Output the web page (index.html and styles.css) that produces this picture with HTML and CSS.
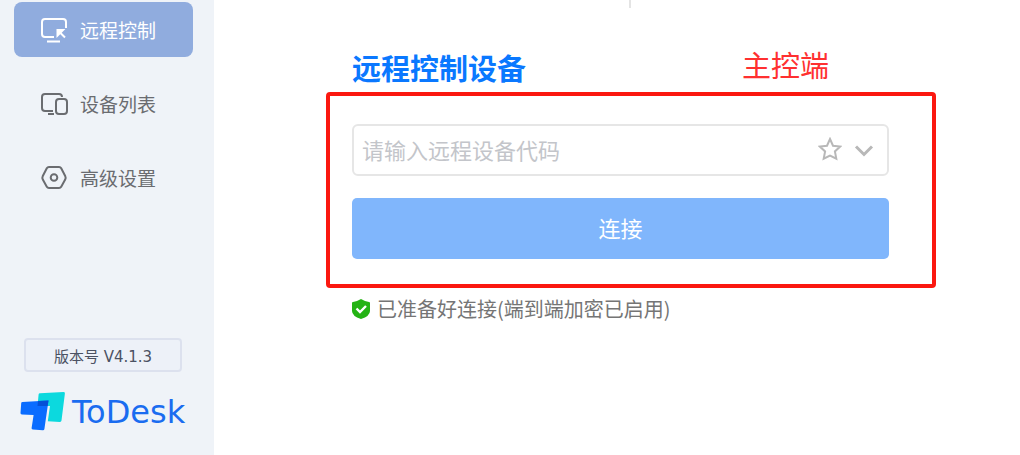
FILE: index.html
```html
<!DOCTYPE html>
<html lang="zh-CN">
<head>
    <meta charset="UTF-8">
    <meta name="viewport" content="width=device-width, initial-scale=1">
    <title>ToDesk</title>
    <link rel="stylesheet" href="styles.css">
</head>
<body>
    <div class="app">
        <aside class="sidebar">
            <nav class="menu">
                <a class="menu-item active" href="#control">
                    <svg class="menu-icon" viewBox="0 0 28 28" aria-hidden="true">
                        <path d="M14 21H5a3 3 0 0 1-3-3V6a3 3 0 0 1 3-3h18a3 3 0 0 1 3 3v6M7 25.500h13"/>
                        <path d="M25 21.500l-7-7"/>
                        <path fill="currentColor" d="M17.500 19.500V14h5.500z"/>
                    </svg>
                    <span>远程控制</span>
                </a>
                <a class="menu-item" href="#devices">
                    <svg class="menu-icon" viewBox="0 0 28 28" aria-hidden="true">
                        <path d="M13 21H5a3 3 0 0 1-3-3V7a3 3 0 0 1 3-3h14a3 3 0 0 1 3 3M8 24h6"/>
                        <rect x="16" y="9" width="11" height="15" rx="3"/>
                    </svg>
                    <span>设备列表</span>
                </a>
                <a class="menu-item" href="#settings">
                    <svg class="menu-icon" viewBox="0 0 28 28" aria-hidden="true">
                        <path d="M9 3h10q1.500 0 2.200 1.300l4 7.700q.9 1.800 0 3.600l-4 7.100Q20.500 24 19 24H9q-1.500 0-2.200-1.300l-4-7.100q-.9-1.800 0-3.600l4-7.700Q7.500 3 9 3z"/>
                        <circle cx="14" cy="13.500" r="3.300"/>
                    </svg>
                    <span>高级设置</span>
                </a>
            </nav>

            <div class="sidebar-footer">
                <button class="version" type="button">版本号 V4.1.3</button>
                <div class="brand">
                    <svg class="brand-logo" viewBox="0 0 46 40" aria-hidden="true">
                        <path fill="#0cd9de" d="M20 1.200L43.500 0q1.500 0 1.400 1.400L41.500 28.500q-.2 1.500-1.700 1.400L27.800 29.200 30 14H17.500L18.600 2.500Q18.700 1.300 20 1.200z"/>
                        <path fill="#0a6cff" d="M2.500 10l26-1.500-4.100 28.500q-.2 1.400-1.600 1.300l-10-.8q-1.400-.1-1.200-1.500l2-13-11.700-.6Q.4 22.300.5 21L1.200 11.300Q1.300 10.100 2.500 10z"/>
                        <path fill="#0650d6" d="M18 9.100l10.500-.6L27.600 14H17.500z"/>
                    </svg>
                    <span>ToDesk</span>
                </div>
            </div>
        </aside>

        <main class="content">
            <div class="top-divider"></div>

            <div class="title-row">
                <h1>远程控制设备</h1>
                <span class="mark">主控端</span>
            </div>

            <form class="connect-box">
                <div class="field">
                    <input type="text" placeholder="请输入远程设备代码" aria-label="请输入远程设备代码">
                    <button class="icon-btn" type="button" aria-label="收藏">
                        <svg viewBox="0 0 24 24" aria-hidden="true">
                            <path d="M12 2l3 6.700 7.200.8-5.300 4.900 1.400 7.200L12 18.500l-6.300 3.100 1.400-7.200L1.800 9.500 9 8.700z"/>
                        </svg>
                    </button>
                    <button class="icon-btn arrow" type="button" aria-label="展开">
                        <svg viewBox="0 0 24 24" aria-hidden="true">
                            <path d="M4 9.500l8 8 8-8"/>
                        </svg>
                    </button>
                </div>
                <button class="connect-btn" type="button">连接</button>
            </form>

            <p class="status">
                <svg class="shield" viewBox="0 0 18 20" aria-hidden="true">
                    <path fill="#24b314" d="M9 0q4 2.500 8 3 1 .1 1 1v8q0 5-9 8-9-3-9-8V4q0-.9 1-1 4-.5 8-3z"/>
                    <path fill="none" stroke="#fff" stroke-width="2.400" d="M4.500 9.500L8 13l6-6"/>
                </svg>
                <span>已准备好连接(端到端加密已启用)</span>
            </p>
        </main>
    </div>
</body>
</html>
```
FILE: styles.css
```css
* {
    box-sizing: border-box;
}

body {
    margin: 0;
    font-family: "Noto Sans CJK SC", sans-serif;
    background: #fff;
    color: #666;
}

button,
input {
    font-family: inherit;
}

.app {
    display: flex;
    min-height: 100vh;
}

/* sidebar */
.sidebar {
    flex: 0 0 214px;
    display: flex;
    flex-direction: column;
    justify-content: space-between;
    padding: 2px 21px 23px 14px;
    background: #eff3f8;
}

.menu {
    display: flex;
    flex-direction: column;
    gap: 19px;
}

.menu-item {
    display: flex;
    align-items: center;
    gap: 12px;
    height: 55px;
    padding: 0 26px;
    border-radius: 8px;
    font-size: 19px;
    color: #6a6c70;
    text-decoration: none;
}

.menu-item.active {
    background: #90acde;
    color: #fff;
}

.menu-icon {
    width: 28px;
    height: 28px;
    fill: none;
    stroke: currentColor;
    stroke-width: 2;
}

.sidebar-footer {
    display: flex;
    flex-direction: column;
    gap: 20px;
}

.version {
    height: 34px;
    margin: 0 11px 0 10px;
    padding: 0;
    border: 2px solid #dce1ee;
    border-radius: 4px;
    background: #edf1f8;
    font-family: "DejaVu Sans", "Noto Sans CJK SC", sans-serif;
    font-size: 15px;
    color: #4b5263;
}

.brand {
    display: flex;
    align-items: center;
    gap: 6px;
    padding-left: 6px;
    font-family: "DejaVu Sans", sans-serif;
    font-size: 32px;
    line-height: 40px;
    color: #1a6cf0;
}

.brand-logo {
    width: 46px;
    height: 40px;
}

/* main area */
.content {
    flex: 1;
    padding: 0 84px 0 112px;
}

.top-divider {
    width: 50%;
    height: 8px;
    border-right: 2px solid #e4e4e4;
}

.title-row {
    display: flex;
    align-items: flex-start;
    gap: 216px;
    height: 84px;
    padding: 36px 26px 0;
    line-height: 40px;
}

.title-row h1 {
    margin: 0;
    font-size: 29px;
    line-height: 46px;
    color: #0a78ff;
}

.mark {
    font-size: 29px;
    font-weight: 400;
    color: #ff3030;
}

.connect-box {
    display: flex;
    flex-direction: column;
    gap: 22px;
    padding: 28px 43px 25px 22px;
    border: 4px solid #fb1810;
    border-radius: 4px;
}

.field {
    display: flex;
    align-items: center;
    gap: 10px;
    height: 52px;
    padding: 0 11px 2px 8px;
    border: 2px solid #e6e6e6;
    border-radius: 6px;
}

.field input {
    flex: 1;
    min-width: 0;
    padding: 0;
    border: 0;
    outline: 0;
    background: none;
    font-size: 22px;
    line-height: 30px;
}

.field input::placeholder {
    color: #c3c5ca;
}

.icon-btn {
    width: 24px;
    height: 24px;
    padding: 0;
    border: 0;
    background: none;
}

.icon-btn svg {
    display: block;
    fill: none;
    stroke: #b8b8b8;
    stroke-width: 2;
}

.arrow svg {
    stroke-width: 3;
}

.connect-btn {
    height: 61px;
    padding: 0 0 4px;
    border: 0;
    border-radius: 5px;
    background: #80b6fc;
    font-size: 22px;
    color: #fff;
}

.status {
    display: flex;
    align-items: center;
    gap: 7px;
    margin: 7px 0 0;
    padding-left: 26px;
    font-size: 20px;
    line-height: 28px;
    color: #757575;
}

.shield {
    width: 18px;
    height: 20px;
}
```
